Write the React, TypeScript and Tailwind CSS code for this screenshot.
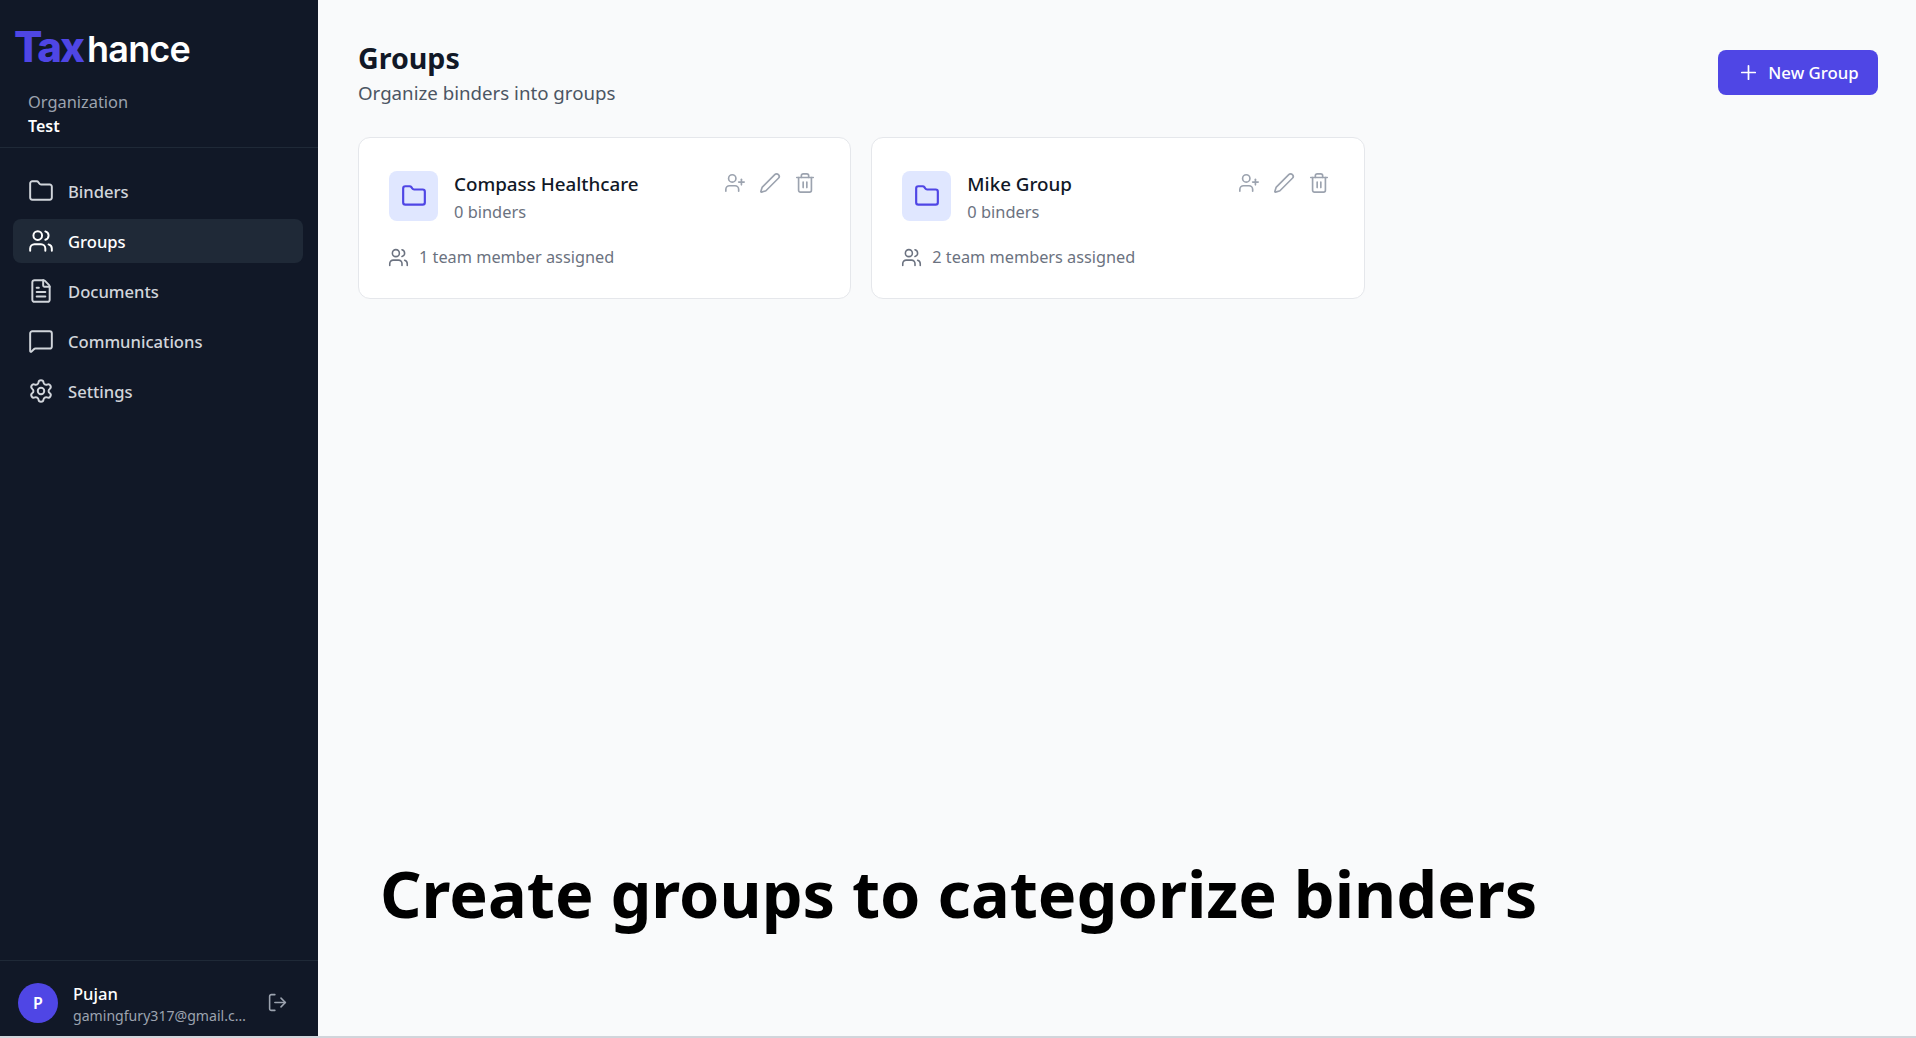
import React from 'react';
import { Folder, Users, FileText, MessageSquare, Settings, Plus, UserPlus, Pen, Trash2, LogOut } from 'lucide-react';

const navItems = [
  { label: 'Binders', icon: Folder },
  { label: 'Groups', icon: Users, active: true },
  { label: 'Documents', icon: FileText },
  { label: 'Communications', icon: MessageSquare },
  { label: 'Settings', icon: Settings },
];

const groups = [
  { name: 'Compass Healthcare', binders: '0 binders', members: '1 team member assigned' },
  { name: 'Mike Group', binders: '0 binders', members: '2 team members assigned' },
];

const GroupCard = ({ name, binders, members }: { name: string; binders: string; members: string }) => (
  <div className="h-[162px] bg-white border border-[#e5e7eb] rounded-xl pt-[33px] pl-[30px] pr-[34px]">
    <div className="flex items-start">
      <div className="w-[49px] h-[50px] rounded-lg bg-[#e0e7ff] flex items-center justify-center">
        <Folder className="w-[26px] h-[26px] text-[#4f46e5]" strokeWidth={2} />
      </div>
      <div className="ml-[16px] flex-1">
        <div className="text-[18.8px] leading-[28px] font-medium text-[#111827] -mt-[1px]">{name}</div>
        <div className="text-[16.4px] leading-[27px] text-[#6b7280]">{binders}</div>
      </div>
      <div className="flex items-center gap-[13px] mt-[1px] text-[#9ca3af]">
        <UserPlus className="w-[22px] h-[22px]" strokeWidth={1.8} />
        <Pen className="w-[22px] h-[22px]" strokeWidth={1.8} />
        <Trash2 className="w-[22px] h-[22px]" strokeWidth={1.8} />
      </div>
    </div>
    <div className="flex items-center mt-[20px] text-[#6b7280]">
      <Users className="w-[21px] h-[21px] -ml-[1px]" strokeWidth={1.8} />
      <span className="ml-[10px] text-[16.3px] leading-[24px]">{members}</span>
    </div>
  </div>
);

export default function App() {
  return (
    <div className="relative flex h-[1038px] overflow-hidden bg-[#f9fafb] font-['Noto_Sans',sans-serif]">
      <aside className="w-[318px] shrink-0 h-[1036px] bg-[#111827] flex flex-col">
        <div className="h-[148px] border-b border-[#1f2937] px-[14px] pt-[22px]">
          <div className="text-[36px] leading-[50px] font-semibold tracking-[-0.8px] text-white font-['Inter',sans-serif] whitespace-nowrap">
            <span className="text-[42px] font-extrabold tracking-[-2px] mr-[4px] text-[#4f46e5]">Tax</span>hance
          </div>
          <div className="ml-[14px] mt-[16px] text-[16.4px] leading-[24px] text-[#9ca3af]">Organization</div>
          <div className="ml-[14px] text-[16px] leading-[24px] font-semibold text-white">Test</div>
        </div>
        <nav className="flex-1 pl-[13px] pr-[15px] pt-[21px] flex flex-col gap-[6px]">
          {navItems.map(({ label, icon: Icon, active }) => (
            <div
              key={label}
              className={`h-[44px] rounded-lg flex items-center pl-[15px] ${active ? 'bg-[#1f2937] text-white' : 'text-[#d1d5db]'}`}
            >
              <Icon className="w-[26px] h-[26px] -mt-[1px]" strokeWidth={1.8} />
              <span className="ml-[14px] pt-[1px] text-[16.6px] leading-[24px] font-medium">{label}</span>
            </div>
          ))}
        </nav>
        <div className="h-[76px] border-t border-[#1f2937] flex items-center pl-[18px] pt-[8px]">
          <div className="w-10 h-10 rounded-full bg-[#4f46e5] flex items-center justify-center text-white text-[16px] font-semibold">
            P
          </div>
          <div className="ml-[15px] w-[175px] mt-[5px]">
            <div className="text-[16.6px] leading-[22px] font-medium text-white">Pujan</div>
            <div className="text-[14.1px] leading-[22px] text-[#9ca3af] truncate">gamingfury317@gmail.com</div>
          </div>
          <LogOut className="ml-[19px] w-[21px] h-[21px] text-[#9ca3af]" strokeWidth={1.8} />
        </div>
      </aside>

      <main className="flex-1 h-[1036px] pl-[40px] pr-[38px] pt-[40px]">
        <div className="flex items-start justify-between">
          <div>
            <h1 className="text-[28.6px] leading-[36px] font-bold text-[#111827]">Groups</h1>
            <p className="mt-[3px] text-[18.7px] leading-[28px] text-[#4b5563]">Organize binders into groups</p>
          </div>
          <button className="mt-[10px] w-[160px] h-[45px] rounded-lg bg-[#4f46e5] text-white flex items-center justify-center text-[16.8px] font-medium">
            <Plus className="w-[23px] h-[23px] mr-[8px]" strokeWidth={1.8} />
            New Group
          </button>
        </div>
        <div className="mt-[30px] grid grid-cols-3 gap-[20px]">
          {groups.map((g) => (
            <GroupCard key={g.name} {...g} />
          ))}
        </div>
      </main>

      {/* caption burned into the screenshot */}
      <div className="absolute left-[380px] top-[848px] text-[64.8px] leading-[90px] font-bold text-black whitespace-nowrap">
        Create groups to categorize binders
      </div>
      <div className="absolute left-0 right-0 bottom-0 h-[2px] bg-[#d1d5db]" />
    </div>
  );
}
